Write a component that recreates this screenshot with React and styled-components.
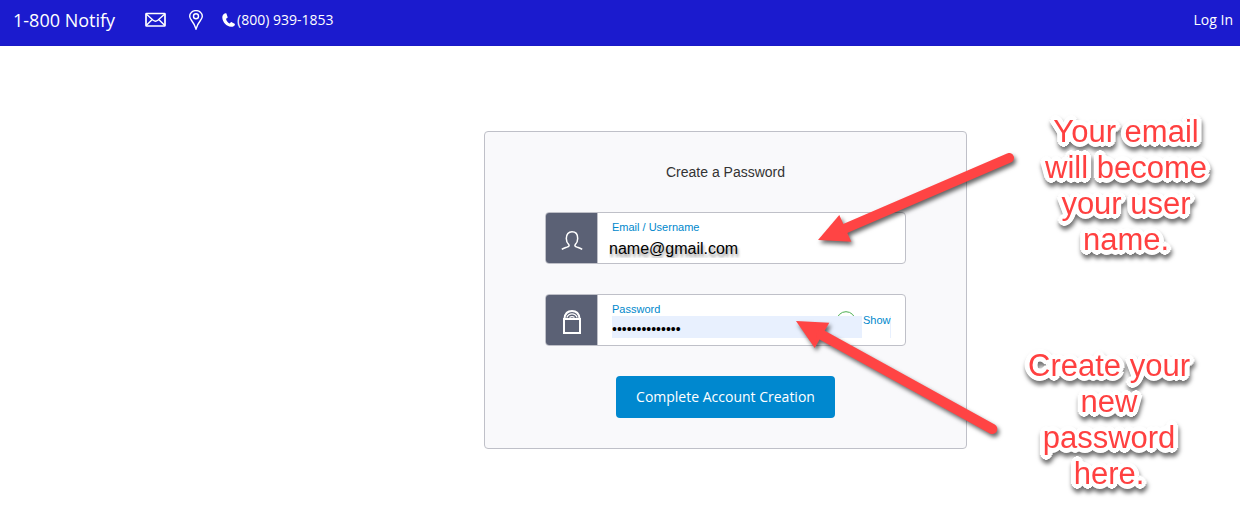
import React from "react";
import styled, { createGlobalStyle } from "styled-components";

const GlobalStyle = createGlobalStyle`
  * { box-sizing: border-box; }
  body {
    margin: 0;
    background: #ffffff;
    font-family: "Liberation Sans", Arial, sans-serif;
    color: #333333;
  }
`;

const Header = styled.header`
  display: flex;
  align-items: center;
  height: 46px;
  padding: 0 7px 6px 13px;
  background: #1b1bce;
  border-bottom: 1px solid #1a1ac6;
  font-family: "Open Sans", "Noto Sans", sans-serif;
  font-size: 14px;
`;

const HeaderLink = styled.a`
  display: flex;
  align-items: center;
  gap: 2px;
  color: #ffffff;
  text-decoration: none;
  white-space: nowrap;
`;

const Brand = styled(HeaderLink)`
  font-size: 18px;
`;

const Contacts = styled.nav`
  display: flex;
  align-items: center;
  gap: 19px;
  margin-left: 30px;
  flex: 1;
`;

const Main = styled.main`
  display: grid;
  grid-template-columns: 1fr 483px 273px;
  align-items: start;
`;

const Card = styled.form`
  grid-column: 2;
  position: relative;
  display: flex;
  flex-direction: column;
  align-items: center;
  gap: 30px;
  margin-top: 85px;
  padding: 30px 60px;
  background: #f9f9fb;
  border: 1px solid #bfc0c8;
  border-radius: 4px;
`;

const Title = styled.h1`
  margin: 0;
  font-size: 14px;
  font-weight: 400;
  line-height: 20px;
`;

const Field = styled.div`
  display: flex;
  width: 100%;
  height: 52px;
  background: #ffffff;
  border: 1px solid #bfc0c8;
  border-radius: 4px;
  overflow: hidden;
`;

const FieldIcon = styled.div`
  display: flex;
  align-items: center;
  justify-content: center;
  width: 52px;
  padding-top: 4px;
  background: #5b6175;
  border-right: 1px solid #bfc0c8;
`;

const FieldBody = styled.div`
  flex: 1;
  display: flex;
  flex-direction: column;
  padding: 7px 14px 0 11px;
`;

const Label = styled.label`
  padding-left: 3px;
  font-size: 11px;
  line-height: 14px;
  color: #0088cc;
`;

const TextInput = styled.input`
  width: 100%;
  height: 28px;
  padding: 2px 0 0;
  border: 0;
  outline: 0;
  background: transparent;
  font-family: inherit;
  font-size: 16px;
  line-height: 26px;
  color: #000000;
  text-shadow: 1px 3px 3px rgba(0, 0, 0, 0.45);
`;

const PasswordRow = styled.div`
  position: relative;
  display: flex;
  height: 22px;
  margin-left: 3px;
  padding-right: 1px;
  background: #e8f0fe;
`;

const PasswordInput = styled.input`
  position: relative;
  flex: 1;
  min-width: 0;
  padding: 3px 0 0;
  border: 0;
  outline: 0;
  background: #e8f0fe;
  font-family: inherit;
  font-size: 14px;
  color: #000000;
`;

const ShowButton = styled.button`
  display: flex;
  align-items: flex-start;
  width: 28px;
  padding: 0 0 0 1px;
  border: 0;
  background: #ffffff;
  font-family: inherit;
  font-size: 11px;
  line-height: 8px;
  color: #0088cc;
`;

const StatusRing = styled.svg`
  position: absolute;
  right: 35px;
  top: -5px;
`;

const SubmitButton = styled.button`
  height: 42px;
  padding: 0 20px 2px;
  border: 0;
  border-radius: 4px;
  background: #0088cf;
  font-family: "Open Sans", "Noto Sans", sans-serif;
  font-size: 14px;
  color: #ffffff;
`;

const Arrows = styled.svg`
  position: absolute;
  left: 0;
  top: 0;
  overflow: visible;
  pointer-events: none;
  filter: drop-shadow(2px 3px 2px rgba(0, 0, 0, 0.6));
`;

const Notes = styled.aside`
  grid-column: 3;
  display: flex;
  flex-direction: column;
  gap: 74px;
  padding: 68px 0 0 54px;
`;

const Note = styled.p`
  width: 176px;
  margin: 0 0 0 ${(p) => p.$indent}px;
  padding-bottom: 16px;
  font-size: 31px;
  line-height: 36px;
  text-align: center;
  color: #ff4040;
  text-shadow:
    5px 0 0 #fff, -5px 0 0 #fff, 0 5px 0 #fff, 0 -5px 0 #fff,
    4px 2px 0 #fff, -4px 2px 0 #fff, 4px -2px 0 #fff, -4px -2px 0 #fff,
    3px 3px 0 #fff, -3px 3px 0 #fff, 3px -3px 0 #fff, -3px -3px 0 #fff,
    2px 4px 0 #fff, -2px 4px 0 #fff, 2px -4px 0 #fff, -2px -4px 0 #fff,
    2px 0 0 #fff, -2px 0 0 #fff, 0 2px 0 #fff, 0 -2px 0 #fff;
  filter: drop-shadow(1px 4px 2px rgba(0, 0, 0, 0.55));
`;

const MailIcon = () => (
  <svg width="21" height="15" viewBox="0 0 21 15" fill="none" stroke="#fff" strokeWidth="1.700">
    <rect x="1" y="1.500" width="19" height="12.500" rx="0.6" />
    <path d="M1.2 2l7 6.300q2.300 1.800 4.600 0l7-6.300M1.200 13.500l6-6M19.800 13.500l-6-6" strokeWidth="1.400" />
  </svg>
);

const PinIcon = () => (
  <svg width="18" height="20" viewBox="-4 0 18 20" fill="none" stroke="#fff" strokeWidth="1.400">
    <path d="M7 19Q5.500 14.200 2.600 10.500C1.200 8.700.7 7.700.7 6.300a6.300 5.700 0 0 1 12.600 0c0 1.400-.5 2.400-1.900 4.200Q8.500 14.200 7 19z" />
    <circle cx="7" cy="6.200" r="2.500" />
  </svg>
);

const PhoneIcon = () => (
  <svg width="13" height="14" viewBox="0 0 13 14" fill="#fff">
    <path d="M3.500.2C1.500.7.200 2.200.3 4.600c.2 4.600 4.200 9 8.700 9.200 2 .1 3.300-.7 3.900-2.100.1-.4 0-.7-.3-.9L9.700 9.200c-.3-.2-.7-.1-.9.100l-1.100 1.200C5.800 9.600 4.300 7.600 4 5.700l1.300-.8c.3-.2.400-.5.300-.8L4.400.6C4.300.3 3.900.100 3.500.2z" />
  </svg>
);

const UserIcon = () => (
  <svg width="22" height="19" viewBox="0 0 22 19" fill="none" stroke="#fff" strokeWidth="1.500">
    <path d="M.8 18.300c1.500-1 3.300-1.500 5.200-2.200 2-.7 2.600-1.400 1.800-2.500C6.200 12.100 5.300 9.900 5.300 7.400 5.300 3.300 7.600.8 11 .8s5.700 2.500 5.700 6.600c0 2.500-.9 4.700-2.500 6.200-.8 1.100-.2 1.800 1.800 2.500 1.900.7 3.700 1.200 5.200 2.200" />
  </svg>
);

const LockIcon = () => (
  <svg width="20" height="24" viewBox="0 0 20 24" fill="none" stroke="#fff">
    <rect x="2" y="9" width="16" height="14" strokeWidth="2" />
    <path d="M2.500 8.500C3 3.700 5.800 1.100 10 1.100S17 3.700 17.500 8.500" strokeWidth="2" />
    <path d="M4.800 7.500C6 5 7.700 3.900 10 3.900s4 1.100 5.200 3.600M7.500 7.600q2.500-2 5 0" strokeWidth="1.300" />
  </svg>
);

export default function App() {
  return (
    <>
      <GlobalStyle />
      <Header>
        <Brand href="#home">1-800 Notify</Brand>
        <Contacts>
          <HeaderLink href="#mail" aria-label="Email us"><MailIcon /></HeaderLink>
          <HeaderLink href="#location" aria-label="Location"><PinIcon /></HeaderLink>
          <HeaderLink href="tel:8009391853"><PhoneIcon />(800) 939-1853</HeaderLink>
        </Contacts>
        <HeaderLink href="#login">Log In</HeaderLink>
      </Header>
      <Main>
        <Card onSubmit={(e) => e.preventDefault()}>
          <Title>Create a Password</Title>
          <Field>
            <FieldIcon><UserIcon /></FieldIcon>
            <FieldBody>
              <Label htmlFor="email">Email / Username</Label>
              <TextInput id="email" type="text" defaultValue="name@gmail.com" />
            </FieldBody>
          </Field>
          <Field>
            <FieldIcon><LockIcon /></FieldIcon>
            <FieldBody>
              <Label htmlFor="password">Password</Label>
              <PasswordRow>
                <StatusRing width="20" height="20" viewBox="0 0 20 20" fill="none" stroke="#4caf50">
                  <circle cx="10" cy="10" r="9.300" />
                </StatusRing>
                <PasswordInput id="password" type="password" defaultValue="abcdefghijklmn" />
                <ShowButton type="button">Show</ShowButton>
              </PasswordRow>
            </FieldBody>
          </Field>
          <SubmitButton type="submit">Complete Account Creation</SubmitButton>
          <Arrows width="540" height="318" viewBox="0 0 540 318" fill="#ff4444" stroke="#ff4444" aria-hidden="true">
            <path d="M333 108L354.300 83L366.300 109.700Z" stroke="none" />
            <path d="M359 97L524 26" strokeWidth="10" strokeLinecap="round" />
            <path d="M311 189L344.300 190.700L329.700 216Z" stroke="none" />
            <path d="M336 202.500L507.300 297" strokeWidth="10" strokeLinecap="round" />
          </Arrows>
        </Card>
        <Notes>
          <Note $indent={17}>Your email will become your user name.</Note>
          <Note $indent={0}>Create your new password here.</Note>
        </Notes>
      </Main>
    </>
  );
}
